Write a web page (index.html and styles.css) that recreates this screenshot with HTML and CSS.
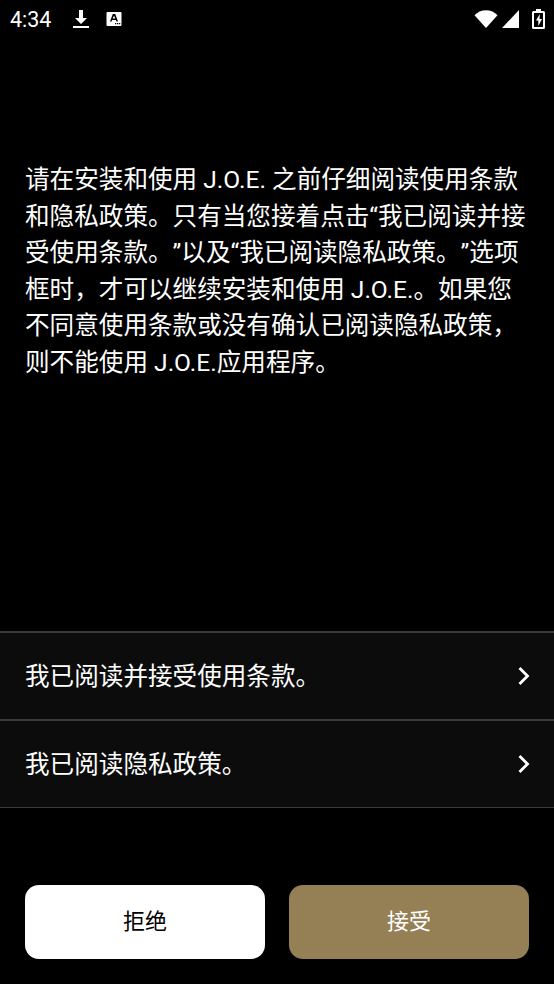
FILE: index.html
```html
<!DOCTYPE html>
<html lang="zh-CN">
<head>
<meta charset="utf-8">
<title>J.O.E.</title>
<link rel="stylesheet" href="styles.css">
</head>
<body>
<div class="screen">
  <header class="status">
    <span class="time">4:34</span>
    <svg class="ic-dl" viewBox="0 0 18 20" width="18" height="20"><path d="M7 1h4v8h4l-6 6-6-6h4zM1 17h16v2H1z" fill="#fff"/></svg>
    <svg class="ic-a" viewBox="0 0 16 16" width="16" height="16"><path fill="#fff" fill-rule="evenodd" d="M1.500 1h13A1 1 0 0 1 15.500 2v12a1 1 0 0 1-1 1h-13a1 1 0 0 1-1-1V2a1 1 0 0 1 1-1zM6.800 3 4 10.500h1.600l.5-1.500h3.800l.5 1.500H12L9.200 3zM8 4.800 9.400 7.500H6.600zM9 12h1.300v1.300H9zM11 12h1.300v1.300H11zM13 12h1.300v1.300H13z"/></svg>
    <span class="spacer"></span>
    <svg class="ic-wifi" viewBox="0 0 24 18" width="24" height="18"><path d="M12 18 .5 5.200C3.500 2.300 7.500.3 12 .3s8.500 2 11.500 4.900z" fill="#fff"/></svg>
    <svg class="ic-sig" viewBox="0 0 18 18" width="18" height="18"><path d="M17 0v18H0z" fill="#fff"/></svg>
    <svg class="ic-bat" viewBox="0 0 13 20" width="13" height="20"><path fill="#fff" fill-rule="evenodd" d="M4 0h5v2h2.500A1.500 1.500 0 0 1 13 3.500v15a1.500 1.500 0 0 1-1.500 1.500h-10A1.500 1.500 0 0 1 0 18.500v-15A1.500 1.500 0 0 1 1.500 2H4zM2 4v14h9V4zM7.800 5 4 11.500h2.300V17L10 10H7.500z"/></svg>
  </header>
  <main class="intro">
    <p>请在安装和使用 J.O.E. 之前仔细阅读使用条款和隐私政策。只有当您接着点击“我已阅读并接受使用条款。”以及“我已阅读隐私政策。”选项框时，才可以继续安装和使用 J.O.E.。如果您不同意使用条款或没有确认已阅读隐私政策，则不能使用 J.O.E.应用程序。</p>
  </main>
  <nav class="links">
    <div class="row"><span>我已阅读并接受使用条款。</span><svg viewBox="0 0 14 20" width="14" height="20"><path d="M2.500 2 10.500 10 2.500 18" fill="none" stroke="#fff" stroke-width="2.800"/></svg></div>
    <div class="row"><span>我已阅读隐私政策。</span><svg viewBox="0 0 14 20" width="14" height="20"><path d="M2.500 2 10.500 10 2.500 18" fill="none" stroke="#fff" stroke-width="2.800"/></svg></div>
  </nav>
  <footer class="actions">
    <button class="btn reject">拒绝</button>
    <button class="btn accept">接受</button>
  </footer>
</div>
</body>
</html>
```
FILE: styles.css
```css
* { box-sizing: border-box; }
html, body { margin: 0; padding: 0; background: #000; }
body { font-family: "Roboto", "Noto Sans CJK SC", sans-serif; color: #fff; text-spacing-trim: space-all; }
.screen { width: 554px; height: 984px; display: flex; flex-direction: column; overflow: hidden; }
.status { height: 38px; display: flex; align-items: center; padding: 0 9px 0 10px; }
.time { font-size: 21.500px; width: 62px; }
.ic-a { margin-left: 16px; }
.spacer { flex: 1; }
.ic-sig { margin-left: 4px; }
.ic-bat { margin-left: 12px; }
.intro { height: 593px; padding: 124px 25px 0; }
.intro p { margin: 0; font-size: 24.600px; line-height: 36.500px; }
.links { border-top: 2px solid #3a3a3a; }
.row { height: 87.670px; padding: 0 23px 0 25px; background: #0c0c0c; border-bottom: 2px solid #3a3a3a; display: flex; align-items: center; justify-content: space-between; font-size: 24.600px; }
.row:last-child { border-bottom-width: 1px; }
.row span { padding-bottom: 3px; }
.actions { margin-top: 77px; padding: 0 25px; display: flex; justify-content: space-between; }
.btn { width: 240px; height: 74px; border: 0; border-radius: 14px; font: inherit; font-size: 22px; padding: 0 0 6px; }
.reject { background: #fff; color: #000; }
.accept { background: #957f55; color: #fff; }
```
